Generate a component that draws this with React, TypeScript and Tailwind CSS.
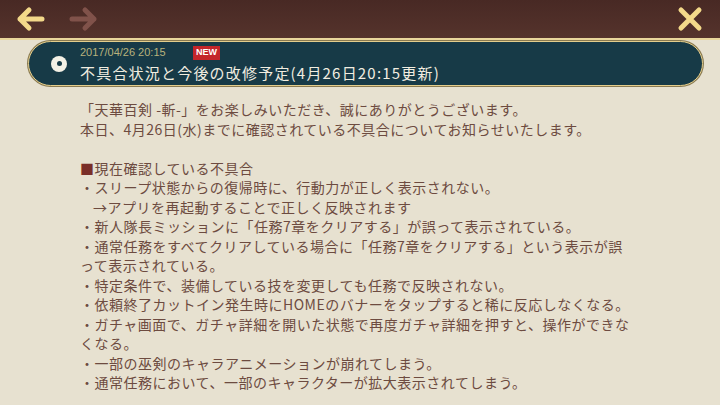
import React from "react";

// お知らせ詳細画面（天華百剣 -斬- の不具合告知）
const lines: { text: string; indent?: boolean; mark?: boolean }[] = [
  { text: "「天華百剣 -斬-」をお楽しみいただき、誠にありがとうございます。" },
  { text: "本日、4月26日(水)までに確認されている不具合についてお知らせいたします。" },
  { text: "" },
  { text: "現在確認している不具合", mark: true },
  { text: "・スリープ状態からの復帰時に、行動力が正しく表示されない。" },
  { text: "→アプリを再起動することで正しく反映されます", indent: true },
  { text: "・新人隊長ミッションに「任務7章をクリアする」が誤って表示されている。" },
  { text: "・通常任務をすべてクリアしている場合に「任務7章をクリアする」という表示が誤" },
  { text: "って表示されている。" },
  { text: "・特定条件で、装備している技を変更しても任務で反映されない。" },
  { text: "・依頼終了カットイン発生時にHOMEのバナーをタップすると稀に反応しなくなる。" },
  { text: "・ガチャ画面で、ガチャ詳細を開いた状態で再度ガチャ詳細を押すと、操作ができな" },
  { text: "くなる。" },
  { text: "・一部の巫剣のキャラアニメーションが崩れてしまう。" },
  { text: "・通常任務において、一部のキャラクターが拡大表示されてしまう。" },
];

function Arrow({ dir, color }: { dir: "left" | "right"; color: string }) {
  return (
    <svg width="30" height="26" viewBox="0 0 30 26" className={dir === "right" ? "-scale-x-100" : ""}>
      <path d="M27 13 H5 M14 4 L5 13 L14 22" fill="none" stroke={color} strokeWidth="5" strokeLinecap="round" strokeLinejoin="round" />
    </svg>
  );
}

export default function App() {
  return (
    <div className="relative h-[405px] w-[720px] overflow-hidden bg-[#e7e1d0] font-['Noto_Sans_CJK_JP',sans-serif]">
      {/* ヘッダー */}
      <div className="flex h-[38px] items-center bg-gradient-to-b from-[#482924] to-[#55332c] pl-[15px] pr-[16px]">
        <Arrow dir="left" color="#f3d98a" />
        <div className="ml-[24px]">
          <Arrow dir="right" color="#80524a" />
        </div>
        <div className="ml-auto">
          <svg width="28" height="28" viewBox="0 0 28 28">
            <path d="M5 5 L23 23 M23 5 L5 23" fill="none" stroke="#f3d98a" strokeWidth="5" strokeLinecap="round" />
          </svg>
        </div>
      </div>
      <div className="h-[2px] bg-[#e9d69c]" />

      {/* タイトル帯 */}
      <div className="ml-[28px] mr-[17px] mt-[1px] flex h-[45px] items-center rounded-full border-[1.5px] border-[#e3cd8c] bg-[#173a47] shadow-[0_0_0_1px_#8a7a50]">
        <div className="ml-[22px] flex h-[16px] w-[16px] items-center justify-center rounded-full bg-[#f4f1e6]">
          <div className="h-[5px] w-[5px] rounded-full bg-[#173a47]" />
        </div>
        <div className="ml-[13px] flex flex-col pt-[1px]">
          <div className="flex h-[14px] items-center">
            <span className="w-[110px] font-['Liberation_Sans',sans-serif] text-[11px] leading-none text-[#b9b27c]">2017/04/26 20:15</span>
            <span className="ml-[3px] flex h-[14px] items-center bg-[#c4262a] px-[3px] font-['Liberation_Sans',sans-serif] text-[9px] font-bold leading-none text-white">NEW</span>
          </div>
          <div className="mt-[3px] h-[20px] text-[15px] leading-[20px] tracking-[1.2px] text-[#f1ede0]">
            不具合状況と今後の改修予定(4月26日20:15更新)
          </div>
        </div>
      </div>

      {/* 本文 */}
      <div className="pl-[80px] pt-[14px] text-[14px] leading-[19.5px] tracking-[0.5px] text-[#6d4b40]">
        {lines.map((l, i) => (
          <div key={i} className={"h-[19.5px] whitespace-nowrap " + (l.indent ? "pl-[13px]" : "")}>
            {l.mark ? <span className="text-[#7a2e28]">■</span> : null}
            {l.text}
          </div>
        ))}
      </div>
    </div>
  );
}
